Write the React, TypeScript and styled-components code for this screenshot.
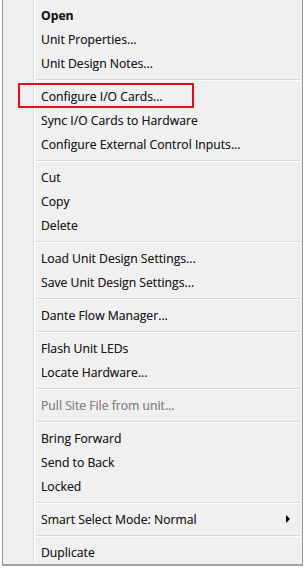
import styled, { createGlobalStyle } from "styled-components"

const GlobalStyle = createGlobalStyle`
  html, body {
    margin: 0;
    padding: 0;
    background: #ffffff;
  }
`

const Page = styled.div`
  width: 305px;
  height: 570px;
  background: #ffffff;
  padding-left: 2px;
  box-sizing: border-box;
  overflow: hidden;
`

const Menu = styled.div`
  width: 301px;
  height: 566px;
  box-sizing: border-box;
  display: flex;
  background: #f0f0f0;
  border: 1px solid #979797;
  border-top: none;
  border-bottom-width: 2px;
  border-bottom-color: #a0a0a0;
  font-family: "Open Sans", "Noto Sans", sans-serif;
  font-size: 12.2px;
  color: #1a1a1a;
  text-shadow: 0 0 0.5px rgba(0, 0, 0, 0.45);
`

const Gutter = styled.div`
  width: 30px;
  flex-shrink: 0;
  border-right: 1px solid #dcdcdc;
  box-shadow: 1px 0 0 #ffffff;
`

const List = styled.div`
  flex: 1;
  display: flex;
  flex-direction: column;
  padding: 3px 0 0 2px;
`

const Item = styled.div<{ $bold?: boolean; $disabled?: boolean }>`
  position: relative;
  height: 24px;
  display: flex;
  align-items: center;
  justify-content: space-between;
  padding: 0 12px 0 5px;
  font-weight: ${(p) => (p.$bold ? 700 : 400)};
  color: ${(p) => (p.$disabled ? "#8c8c8c" : "inherit")};
  white-space: nowrap;
`

const Separator = styled.div`
  height: 9px;
  display: flex;
  align-items: center;
  margin-right: 2px;
  &::after {
    content: "";
    flex: 1;
    height: 1px;
    background: #dadada;
    box-shadow: 0 1px 0 #ffffff;
  }
`

const Arrow = styled.span`
  width: 0;
  height: 0;
  border-left: 4px solid #000000;
  border-top: 4px solid transparent;
  border-bottom: 4px solid transparent;
`

const Highlight = styled.div`
  position: absolute;
  left: -18px;
  top: -1px;
  width: 176px;
  height: 25px;
  border: 2px solid #e01020;
  box-sizing: border-box;
  pointer-events: none;
`

type Entry =
  | { kind: "sep" }
  | { kind: "item"; label: string; bold?: boolean; disabled?: boolean; sub?: boolean; marked?: boolean }

const entries: Entry[] = [
  { kind: "item", label: "Open", bold: true },
  { kind: "item", label: "Unit Properties..." },
  { kind: "item", label: "Unit Design Notes..." },
  { kind: "sep" },
  { kind: "item", label: "Configure I/O Cards...", marked: true },
  { kind: "item", label: "Sync I/O Cards to Hardware" },
  { kind: "item", label: "Configure External Control Inputs..." },
  { kind: "sep" },
  { kind: "item", label: "Cut" },
  { kind: "item", label: "Copy" },
  { kind: "item", label: "Delete" },
  { kind: "sep" },
  { kind: "item", label: "Load Unit Design Settings..." },
  { kind: "item", label: "Save Unit Design Settings..." },
  { kind: "sep" },
  { kind: "item", label: "Dante Flow Manager..." },
  { kind: "sep" },
  { kind: "item", label: "Flash Unit LEDs" },
  { kind: "item", label: "Locate Hardware..." },
  { kind: "sep" },
  { kind: "item", label: "Pull Site File from unit...", disabled: true },
  { kind: "sep" },
  { kind: "item", label: "Bring Forward" },
  { kind: "item", label: "Send to Back" },
  { kind: "item", label: "Locked" },
  { kind: "sep" },
  { kind: "item", label: "Smart Select Mode: Normal", sub: true },
  { kind: "sep" },
  { kind: "item", label: "Duplicate" },
]

const App = () => {
  return (
    <>
      <GlobalStyle />
      <Page>
        <Menu>
          <Gutter />
          <List>
            {entries.map((e, i) =>
              e.kind === "sep" ? (
                <Separator key={i} />
              ) : (
                <Item key={i} $bold={e.bold} $disabled={e.disabled}>
                  <span>{e.label}</span>
                  {e.sub && <Arrow />}
                  {e.marked && <Highlight />}
                </Item>
              )
            )}
          </List>
        </Menu>
      </Page>
    </>
  )
}

export default App
